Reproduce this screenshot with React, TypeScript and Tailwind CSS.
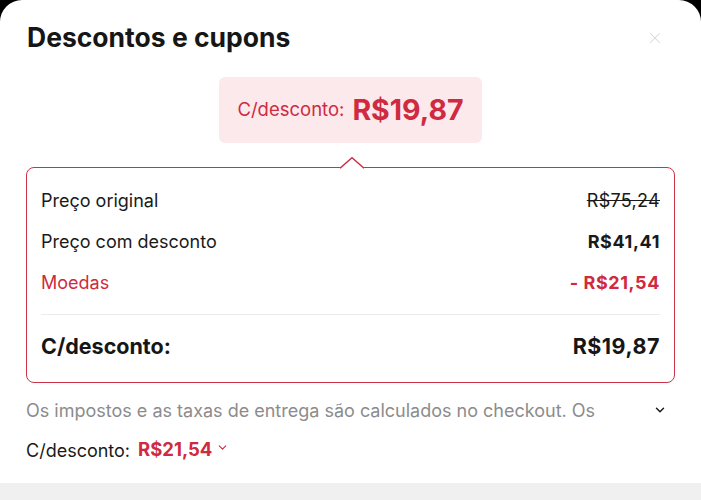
import { ChevronDown, X } from "lucide-react";

const rows = [
  { label: "Preço original", value: "R$75,24", kind: "strike" },
  { label: "Preço com desconto", value: "R$41,41", kind: "bold" },
  { label: "Moedas", value: "- R$21,54", kind: "red" },
] as const;

export default function App() {
  return (
    <div className="w-[701px] h-[500px] bg-black overflow-hidden font-['Inter',sans-serif]">
      <div className="h-full bg-white rounded-t-[22px] flex flex-col">
        {/* Header */}
        <div className="flex items-center justify-between pl-[27px] pr-[37px] pt-[18px] h-[58px]">
          <h1 className="text-[26.5px] font-bold text-[#161616]">Descontos e cupons</h1>
          <X className="w-[18px] h-[18px] text-[#d9d9d9]" strokeWidth={1.4} />
        </div>

        {/* Summary pill */}
        <div className="flex justify-center mt-[19px]">
          <div className="flex gap-[8px] bg-[#fce9ec] rounded-[6px] h-[66px] items-center w-[263px] justify-center">
            <span className="text-[18.5px] text-[#cf2a40]">C/desconto:</span>
            <span className="text-[28.5px] font-bold text-[#cf2a40]">R$19,87</span>
          </div>
        </div>

        {/* Card with caret */}
        <div className="relative mx-[26px] mt-[24px] border-[1.5px] border-[#cc3348] rounded-[8px] px-[14px] pt-[12px] pb-[5px]">
          <svg
            className="absolute -top-[11px] left-[313px]"
            width="24"
            height="12"
            viewBox="0 0 24 12"
          >
            <path d="M0 11.25 L12 0.75 L24 11.25" fill="white" stroke="#cc3348" strokeWidth="1.5" />
          </svg>
          {rows.map((r) => (
            <div key={r.label} className="flex items-center justify-between h-[41px] text-[18px]">
              <span className={r.kind === "red" ? "text-[#cf2a40]" : "text-[#1a1a1a]"}>{r.label}</span>
              <span
                className={
                  r.kind === "strike"
                    ? "text-[#1a1a1a] line-through tracking-[0.3px]"
                    : r.kind === "red"
                    ? "font-bold text-[#cf2a40] tracking-[0.6px]"
                    : "font-bold text-[#1a1a1a] tracking-[0.6px]"
                }
              >
                {r.value}
              </span>
            </div>
          ))}
          <div className="border-t border-[#ececec] mt-[11px]" />
          <div className="flex items-center justify-between h-[62px] text-[21.5px] font-bold text-[#161616]">
            <span>C/desconto:</span>
            <span className="tracking-[0.5px]">R$19,87</span>
          </div>
        </div>

        {/* Footer note */}
        <div className="flex items-center justify-between pl-[26px] pr-[34px] mt-[14px] h-[26px]">
          <span className="text-[18px] text-[#8c8c8c]">
            Os impostos e as taxas de entrega são calculados no checkout. Os
          </span>
          <ChevronDown className="w-[14px] h-[14px] text-[#1a1a1a]" strokeWidth={2.5} />
        </div>
        <div className="flex items-center pl-[26px] mt-[14px] h-[26px] gap-[8px]">
          <span className="text-[18px] text-[#1a1a1a]">C/desconto:</span>
          <span className="text-[18.5px] font-bold text-[#cf2a40]">R$21,54</span>
          <ChevronDown className="w-[13px] h-[13px] text-[#cf2a40] -ml-[4px] -mt-[6px]" strokeWidth={2} />
        </div>
        <div className="mt-auto h-[17px] bg-[#f0f0f0]" />
      </div>
    </div>
  );
}
